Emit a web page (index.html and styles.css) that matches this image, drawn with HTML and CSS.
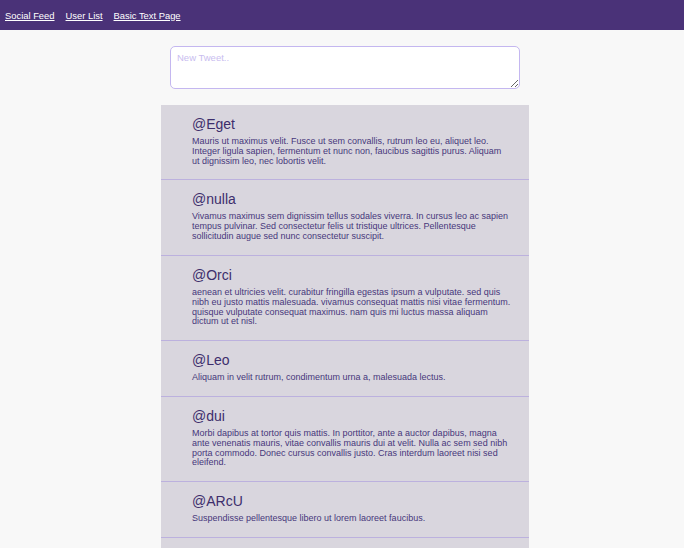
FILE: index.html
```html
<!DOCTYPE html>
<html lang="en">
<head>
<meta charset="utf-8">
<title>Social Feed</title>
<link rel="stylesheet" href="styles.css">
</head>
<body>
<nav class="nav">
  <a href="#" class="nav-link">Social Feed</a>
  <a href="#" class="nav-link">User List</a>
  <a href="#" class="nav-link">Basic Text Page</a>
</nav>
<main class="main">
  <div class="compose">
    <textarea class="tweet-input" placeholder="New Tweet.."></textarea>
  </div>
  <section class="feed">
    <article class="tweet">
      <h2 class="handle">@Eget</h2>
      <p class="body">Mauris ut maximus velit. Fusce ut sem convallis, rutrum leo eu, aliquet leo.<br>Integer ligula sapien, fermentum et nunc non, faucibus sagittis purus. Aliquam<br>ut dignissim leo, nec lobortis velit.</p>
    </article>
    <article class="tweet">
      <h2 class="handle">@nulla</h2>
      <p class="body">Vivamus maximus sem dignissim tellus sodales viverra. In cursus leo ac sapien<br>tempus pulvinar. Sed consectetur felis ut tristique ultrices. Pellentesque<br>sollicitudin augue sed nunc consectetur suscipit.</p>
    </article>
    <article class="tweet">
      <h2 class="handle">@Orci</h2>
      <p class="body">aenean et ultricies velit. curabitur fringilla egestas ipsum a vulputate. sed quis<br>nibh eu justo mattis malesuada. vivamus consequat mattis nisi vitae fermentum.<br>quisque vulputate consequat maximus. nam quis mi luctus massa aliquam<br>dictum ut et nisl.</p>
    </article>
    <article class="tweet">
      <h2 class="handle">@Leo</h2>
      <p class="body">Aliquam in velit rutrum, condimentum urna a, malesuada lectus.</p>
    </article>
    <article class="tweet">
      <h2 class="handle">@dui</h2>
      <p class="body">Morbi dapibus at tortor quis mattis. In porttitor, ante a auctor dapibus, magna<br>ante venenatis mauris, vitae convallis mauris dui at velit. Nulla ac sem sed nibh<br>porta commodo. Donec cursus convallis justo. Cras interdum laoreet nisi sed<br>eleifend.</p>
    </article>
    <article class="tweet">
      <h2 class="handle">@ARcU</h2>
      <p class="body">Suspendisse pellentesque libero ut lorem laoreet faucibus.</p>
    </article>
  </section>
</main>
</body>
</html>
```
FILE: styles.css
```css
html {
  scrollbar-width: none;
}
html::-webkit-scrollbar {
  display: none;
}
body {
  margin: 0;
  background: #f8f8f8;
  font-family: "Liberation Sans", Arial, Helvetica, sans-serif;
  color: #3f2f6e;
}
.nav {
  height: 30px;
  background: #4a3278;
  display: flex;
  align-items: center;
  gap: 11px;
  padding: 0 5px;
}
.nav-link {
  color: #ffffff;
  font-size: 9.4px;
  text-decoration: underline;
}
.main {
  width: 368px;
  margin: 0 auto;
  padding: 16px 0 0 6px;
}
.compose {
  display: flex;
  justify-content: center;
  margin-bottom: 16px;
}
.tweet-input {
  box-sizing: border-box;
  width: 350px;
  height: 43px;
  margin: 0;
  border: 1px solid #c4b7f0;
  border-radius: 5px;
  padding: 5px 6px;
  font-family: "Liberation Sans", Arial, sans-serif;
  font-size: 9.5px;
  background: #ffffff;
  color: #3f2f6e;
}
.tweet-input::placeholder {
  color: #c9bdef;
}
.feed {
  background: #d9d6de;
  padding-bottom: 20px;
}
.tweet {
  padding: 11px 0 13px 31px;
  border-bottom: 1px solid #bcb1de;
}
.handle {
  margin: 0 0 5px;
  font-size: 14px;
  line-height: 16px;
  font-weight: normal;
  color: #3d2e6c;
}
.body {
  margin: 0;
  font-size: 9px;
  line-height: 9.82px;
  white-space: nowrap;
  color: #47377b;
}
```
